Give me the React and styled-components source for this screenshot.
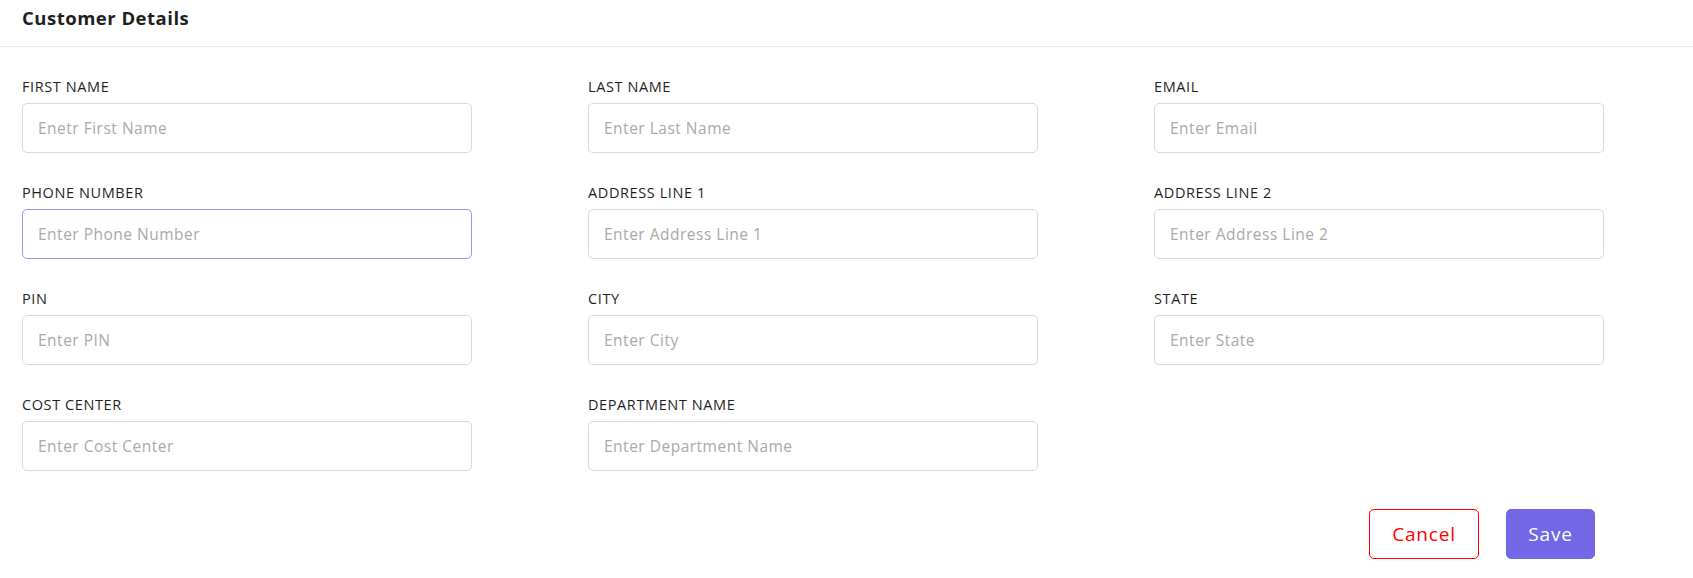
import React from "react";
import styled, { createGlobalStyle } from "styled-components";

const GlobalStyle = createGlobalStyle`
  html, body {
    margin: 0;
    padding: 0;
    background: #ffffff;
    font-family: "Open Sans", "Noto Sans", Arial, sans-serif;
  }
  * { box-sizing: border-box; }
`;

const Page = styled.div`
  width: 1693px;
  min-height: 578px;
  background: #ffffff;
`;

const Header = styled.div`
  height: 47px;
  padding: 4px 22px 0;
  border-bottom: 1px solid #ebebeb;
`;

const Title = styled.h2`
  margin: 0;
  font-size: 18.5px;
  line-height: 27px;
  font-weight: 700;
  color: #1f1f1f;
  letter-spacing: 0.5px;
`;

const Form = styled.form`
  padding: 30px 22px 0;
`;

const Grid = styled.div`
  display: grid;
  grid-template-columns: repeat(3, 450px);
  column-gap: 116px;
  row-gap: 30px;
`;

const Field = styled.div`
  display: flex;
  flex-direction: column;
  gap: 6px;
`;

const Label = styled.label`
  font-size: 14.5px;
  line-height: 20px;
  color: #1f1f1f;
  letter-spacing: 0.6px;
  text-transform: uppercase;
`;

const Input = styled.input`
  width: 450px;
  height: 50px;
  padding: 0 15px;
  border: 1px solid ${(p) => (p.$active ? "#9b92f4" : "#d9d9d9")};
  border-radius: 5px;
  font-family: inherit;
  font-size: 15.5px;
  letter-spacing: 0.5px;
  color: #333;
  outline: none;
  background: #fff;
  &::placeholder {
    color: #a9a9a9;
  }
`;

const Actions = styled.div`
  display: flex;
  justify-content: flex-end;
  gap: 27px;
  padding: 38px 76px 19px 0;
`;

const Button = styled.button`
  height: 50px;
  width: ${(p) => p.$width}px;
  border-radius: 5px;
  font-family: inherit;
  font-size: 19px;
  letter-spacing: 0.8px;
  cursor: pointer;
  border: 1px solid ${(p) => (p.$variant === "primary" ? "#7367e6" : "#ff0000")};
  background: ${(p) => (p.$variant === "primary" ? "#7367e6" : "#ffffff")};
  color: ${(p) => (p.$variant === "primary" ? "#ffffff" : "#ff0000")};
`;

const fields = [
  { label: "First Name", placeholder: "Enetr First Name" },
  { label: "Last Name", placeholder: "Enter Last Name" },
  { label: "Email", placeholder: "Enter Email" },
  { label: "Phone Number", placeholder: "Enter Phone Number", active: true },
  { label: "Address Line 1", placeholder: "Enter Address Line 1" },
  { label: "Address Line 2", placeholder: "Enter Address Line 2" },
  { label: "PIN", placeholder: "Enter PIN" },
  { label: "City", placeholder: "Enter City" },
  { label: "State", placeholder: "Enter State" },
  { label: "Cost Center", placeholder: "Enter Cost Center" },
  { label: "Department Name", placeholder: "Enter Department Name" },
];

export default function App() {
  return (
    <Page>
      <GlobalStyle />
      <Header>
        <Title>Customer Details</Title>
      </Header>
      <Form onSubmit={(e) => e.preventDefault()}>
        <Grid>
          {fields.map((f) => (
            <Field key={f.label}>
              <Label>{f.label}</Label>
              <Input placeholder={f.placeholder} $active={f.active} />
            </Field>
          ))}
        </Grid>
        <Actions>
          <Button type="button" $width={110}>Cancel</Button>
          <Button type="submit" $variant="primary" $width={89}>Save</Button>
        </Actions>
      </Form>
    </Page>
  );
}
